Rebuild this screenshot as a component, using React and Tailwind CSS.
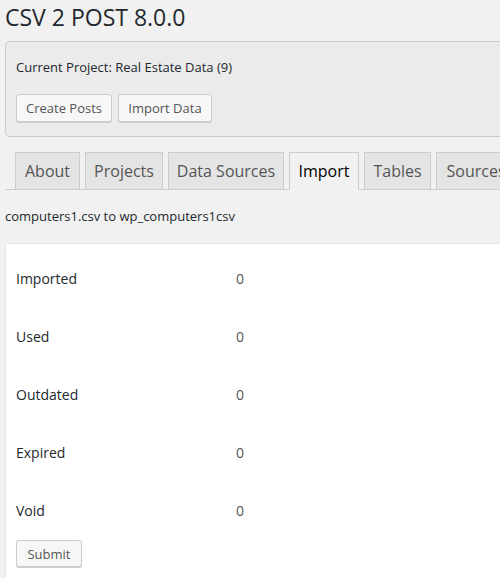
import React from 'react';

const tabs = [
  { label: 'About', w: 'w-[65px]' },
  { label: 'Projects', w: 'w-[78px]' },
  { label: 'Data Sources', w: 'w-[116px]' },
  { label: 'Import', w: 'w-[70px]', active: true },
  { label: 'Tables', w: 'w-[67px]' },
  { label: 'Sources', w: 'w-[80px]' },
];

const rows = ['Imported', 'Used', 'Outdated', 'Expired', 'Void'];

const Button = ({ children, className = '' }) => (
  <button className={`rounded-[3px] border border-[#cccccc] bg-[#f7f7f7] text-[13px] leading-[18px] text-[#555555] shadow-[0_1px_0_#cccccc] ${className}`}>
    {children}
  </button>
);

export default function App() {
  return (
    <div className="w-[500px] h-[578px] overflow-hidden bg-[#f1f1f1] font-['Open_Sans',sans-serif] text-[#23282d]">
      <div className="w-[520px]">
        <h1 className="pl-[5px] pt-[2px] text-[23px] leading-[31px] font-normal">CSV 2 POST 8.0.0</h1>

        <div className="mt-[8px] ml-[5px] h-[96px] rounded-l-[4px] border border-[#cccccc] bg-[#ebebeb] pl-[10px]">
          <p className="pt-[16px] text-[13px] leading-[18px]">Current Project: Real Estate Data (9)</p>
          <div className="mt-[18px] flex gap-[6px]">
            <Button className="w-[96px] h-[28px]">Create Posts</Button>
            <Button className="w-[94px] h-[28px]">Import Data</Button>
          </div>
        </div>

        <div className="mt-[15px] ml-[5px] flex gap-[5px] border-b border-[#cccccc] pl-[10px]">
          {tabs.map((t) => (
            <div
              key={t.label}
              className={`${t.w} -mb-px h-[38px] flex items-center justify-center border border-[#cccccc] text-[16px] ${
                t.active ? 'bg-[#f1f1f1] border-b-[#f1f1f1] text-[#000000]' : 'bg-[#e4e4e4] text-[#555555]'
              }`}
            >
              {t.label}
            </div>
          ))}
        </div>

        <p className="pl-[5px] pt-[17px] text-[13px] leading-[18px]">computers1.csv to wp_computers1csv</p>

        <div className="mt-[18px] ml-[5px] h-[400px] border-t border-l border-[#e5e5e5] bg-white pl-[10px] pt-[5px]">
          {rows.map((r) => (
            <div key={r} className="flex h-[58px] items-center text-[14px]">
              <span className="w-[220px] text-[#23282d]">{r}</span>
              <span className="text-[#555555]">0</span>
            </div>
          ))}
          <Button className="mt-[1px] w-[66px] h-[27px]">Submit</Button>
        </div>
      </div>
    </div>
  );
}
